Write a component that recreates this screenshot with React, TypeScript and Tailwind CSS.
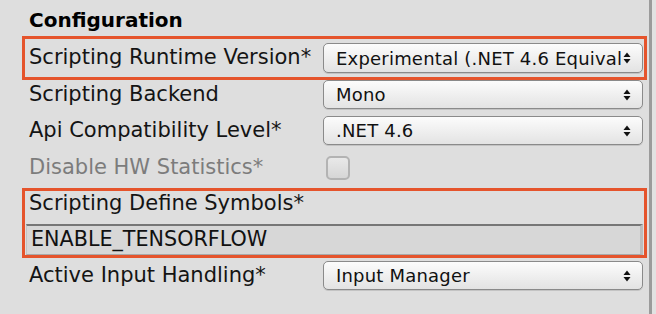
import React from 'react'

const font = { fontFamily: '"DejaVu Sans", "Open Sans", sans-serif' }

function UpDown() {
  return (
    <svg width="8" height="14" viewBox="0 0 8 14" className="shrink-0">
      <path d="M0.5 6 L4 1.5 L7.5 6 Z" fill="#111" />
      <path d="M0.5 8 L7.5 8 L4 12.5 Z" fill="#111" />
    </svg>
  )
}

function Popup({ value, tall }: { value: string; tall?: boolean }) {
  return (
    <div
      className={[
        'w-[320px] shrink-0 flex items-center pl-[12px] pr-[11px] rounded-[5px] border border-[#8a8a8a]',
        'bg-gradient-to-b from-[#fcfcfc] to-[#e3e3e3] shadow-[0_1px_0_rgba(0,0,0,0.12)]',
        tall ? 'h-[30px]' : 'h-[29px]',
      ].join(' ')}
    >
      <span className="flex-1 overflow-hidden whitespace-nowrap text-[18px] text-[#111] tracking-[0.2px]">
        {value}
      </span>
      <UpDown />
    </div>
  )
}

function Label({ text, muted }: { text: string; muted?: boolean }) {
  return (
    <span
      className={[
        'flex-1 whitespace-nowrap text-[21px]',
        muted ? 'text-[#7c7c7c]' : 'text-[#141414]',
      ].join(' ')}
    >
      {text}
    </span>
  )
}

export default function App() {
  return (
    <div className="w-[656px] h-[314px] bg-[#dedede] flex overflow-hidden" style={font}>
      <div className="w-[649px] pl-[22px] pr-[2px] flex flex-col">
        {/* Header */}
        <div className="h-[36px] pt-[4px] pl-[7px] text-[20px] leading-[32px] font-bold text-black">
          Configuration
        </div>

        {/* Scripting Runtime Version */}
        <div className="h-[44px] border-[3px] border-[#e5542c] flex items-center pl-[4px] pr-[1px]">
          <Label text="Scripting Runtime Version*" />
          <Popup value="Experimental (.NET 4.6 Equivalent)" tall />
        </div>

        <div className="h-[29px] flex items-center pl-[7px] pr-[4px]">
          <Label text="Scripting Backend" />
          <Popup value="Mono" />
        </div>

        <div className="mt-[7px] h-[29px] flex items-center pl-[7px] pr-[4px]">
          <Label text="Api Compatibility Level*" />
          <Popup value=".NET 4.6" />
        </div>

        <div className="mt-[8px] h-[30px] flex items-center pl-[7px] pr-[4px]">
          <Label text="Disable HW Statistics*" muted />
          <div className="w-[320px] shrink-0 pl-[3px]">
            <div className="w-[24px] h-[24px] rounded-[5px] border-2 border-[#b3b3b3] bg-gradient-to-b from-[#e9e9e9] to-[#d6d6d6]" />
          </div>
        </div>

        {/* Scripting Define Symbols */}
        <div className="mt-[5px] h-[70px] border-[3px] border-[#e5542c] flex flex-col">
          <div className="h-[33px] flex items-center pl-[4px] pb-[7px]">
            <Label text="Scripting Define Symbols*" />
          </div>
          <div className="h-[31px] ml-[1px] mr-[1px] flex items-center pl-[4px] bg-[#d7d7d7] border-t-2 border-t-[#767676] border-l border-l-[#c4c4c4] border-r-[3px] border-r-[#bdbdbd] border-b border-b-[#a9a9a9]">
            <span className="text-[20.7px] text-[#111] whitespace-nowrap">ENABLE_TENSORFLOW</span>
          </div>
        </div>

        <div className="mt-[3px] h-[29px] flex items-center pl-[7px] pr-[4px]">
          <Label text="Active Input Handling*" />
          <Popup value="Input Manager" />
        </div>
      </div>
      <div className="w-[3px] h-full bg-[#9b9b9b]" />
      <div className="flex-1 bg-[#e2e2e2]" />
    </div>
  )
}
